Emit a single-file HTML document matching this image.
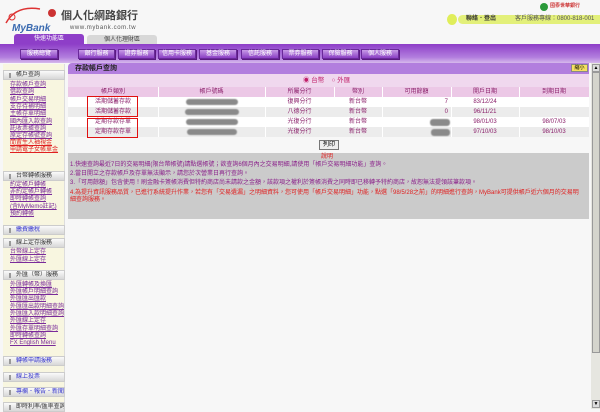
<!DOCTYPE html>
<html><head><meta charset="utf-8"><style>
*{margin:0;padding:0;box-sizing:border-box}
body{width:600px;height:409px;overflow:hidden;background:#f7f7f7;font-family:"Liberation Sans","Noto Sans CJK TC",sans-serif;position:relative}
.a{position:absolute}
.t{font-size:6px;white-space:nowrap;line-height:7px}
.btn{position:absolute;top:49px;height:10px;background:linear-gradient(#c79be6,#8a3fc4);border:1px solid #6a2a9a;color:#fff;font-size:6px;line-height:8px;text-align:center;box-shadow:1px 1px 0 #5a1a80;white-space:nowrap}
.sh{position:absolute;left:3px;width:62px;height:10px;background:linear-gradient(#fafafa,#d8d8d8);border:1px solid #ccc;font-size:6px;line-height:8px;padding-left:12px;color:#333;white-space:nowrap;overflow:hidden}
.sh:before{content:"";position:absolute;left:5px;top:2px;width:2px;height:5px;background:#999}
.it{position:absolute;left:10px;font-size:6px;line-height:7px;color:#7a2b9a;text-decoration:underline;white-space:nowrap}
.td{position:absolute;font-size:6px;line-height:10px;text-align:center;color:#8a1f6a;white-space:nowrap}
.blur{position:absolute;background:#8a8a8a;border-radius:3px;height:6px;filter:blur(.6px)}
</style></head><body>
<!-- header -->
<svg class="a" style="left:2px;top:3px" width="55" height="32"><path d="M4 20 Q14 2 38 6" stroke="#d33" stroke-width="1.5" fill="none"/><circle cx="10" cy="14" r="3" fill="none" stroke="#d33"/><circle cx="50" cy="10" r="4" fill="#c33"/><text x="10" y="28" font-size="10" font-style="italic" font-weight="bold" fill="#3a6ab0" font-family="Liberation Sans">MyBank</text></svg>
<div class="a" style="left:61px;top:10px;font-size:11px;line-height:13px;font-weight:bold;color:#444;white-space:nowrap">個人化網路銀行</div>
<div class="a t" style="left:70px;top:25px;color:#555;font-size:6px;letter-spacing:.6px">www.mybank.com.tw</div>
<div class="a" style="left:540px;top:3px;width:8px;height:8px;border-radius:50%;background:#2a9a3a"></div>
<div class="a t" style="left:550px;top:3px;color:#c33;font-size:5px;font-weight:bold">國泰世華銀行</div>
<div class="a" style="left:447px;top:14px;width:10px;height:11px;border-radius:50%;background:#e0ee5a"></div>
<div class="a" style="left:458px;top:15px;width:142px;height:9px;background:#e3f07a;border-radius:5px 0 0 5px"></div>
<div class="a t" style="left:466px;top:16px;color:#333;font-weight:bold">聯絡．登出</div>
<div class="a t" style="left:515px;top:16px;color:#555">客戶服務專線：0800-818-001</div>
<!-- tabs -->
<div class="a" style="left:14px;top:34px;width:70px;height:11px;background:#8e3ec8;border-radius:3px 3px 0 0;color:#fff;font-size:6px;line-height:11px;text-align:center">快速功能區</div>
<div class="a" style="left:87px;top:35px;width:70px;height:10px;background:#d8d8d8;border-radius:3px 3px 0 0;color:#444;font-size:6px;line-height:10px;text-align:center">個人化理財區</div>
<div class="a" style="left:0;top:44px;width:600px;height:19px;background:linear-gradient(#8e3ec8,#b27ede 70%,#d6b8ec)"></div>
<div class="btn" style="left:20px;width:38px">服務總覽</div>
<div class="btn" style="left:78px;width:37px">銀行服務</div>
<div class="btn" style="left:118px;width:37px">證券服務</div>
<div class="btn" style="left:158px;width:38px">信用卡服務</div>
<div class="btn" style="left:199px;width:38px">基金服務</div>
<div class="btn" style="left:241px;width:38px">信託服務</div>
<div class="btn" style="left:282px;width:37px">票券服務</div>
<div class="btn" style="left:322px;width:37px">保險服務</div>
<div class="btn" style="left:361px;width:38px">個人服務</div>
<!-- sidebar -->
<div class="a" style="left:3px;top:64px;width:62px;height:345px;background:#f8f6e0;border-right:1px solid #ddd"></div>
<div class="sh" style="top:70px">帳戶查詢</div>
<div class="it" style="top:82px">存款帳戶查詢</div>
<div class="it" style="top:89px">借款查詢</div>
<div class="it" style="top:97px">帳戶交易明細</div>
<div class="it" style="top:104px">支存待補明細</div>
<div class="it" style="top:111px">主帳存單明細</div>
<div class="it" style="top:119px">國內匯入款查詢</div>
<div class="it" style="top:126px">託收票據查詢</div>
<div class="it" style="top:133px">原定存帳號查詢</div>
<div class="it" style="top:140px;color:#e02020">閒置生人袖視金</div>
<div class="it" style="top:147px;color:#e02020">申請電子女帳單金</div>
<div class="sh" style="top:171px">台幣轉帳服務</div>
<div class="it" style="top:182px">約定帳戶轉帳</div>
<div class="it" style="top:189px">非約定帳戶轉帳</div>
<div class="it" style="top:196px">即時轉帳查詢</div>
<div class="it" style="top:204px">(含MyMemo註記)</div>
<div class="it" style="top:211px">預約轉帳</div>
<div class="sh" style="top:225px;color:#33c">繳費繳稅</div>
<div class="sh" style="top:238px">線上定存服務</div>
<div class="it" style="top:249px">台幣線上定存</div>
<div class="it" style="top:257px">外匯線上定存</div>
<div class="sh" style="top:270px">外匯（幣）服務</div>
<div class="it" style="top:282px">外匯轉帳及換匯</div>
<div class="it" style="top:289px">外匯帳戶明細查詢</div>
<div class="it" style="top:296px">外匯匯出匯款</div>
<div class="it" style="top:304px">外匯匯出款明細查詢</div>
<div class="it" style="top:311px">外匯匯入款明細查詢</div>
<div class="it" style="top:318px">外匯線上定存</div>
<div class="it" style="top:326px">外匯存單明細查詢</div>
<div class="it" style="top:333px">即時轉帳查詢</div>
<div class="it" style="top:340px">FX English Menu</div>
<div class="sh" style="top:356px;color:#33c">轉帳申請服務</div>
<div class="sh" style="top:372px;color:#33c">線上投票</div>
<div class="sh" style="top:387px;color:#33c">專欄．報告．新聞</div>
<div class="sh" style="top:402px">即時利率/匯率查詢</div>
<!-- content -->
<div class="a" style="left:68px;top:63px;width:521px;height:11px;background:#b27ede;border-radius:4px 0 0 0"></div>
<div class="a t" style="left:75px;top:65px;font-size:7px;font-weight:bold;color:#222">存款帳戶查詢</div>
<div class="a" style="left:571px;top:64px;width:17px;height:8px;background:#f5e060;border:1px solid #888;font-size:5px;line-height:6px;text-align:center">縮小</div>
<div class="a" style="left:68px;top:74px;width:521px;height:13px;background:#f0d8ee"></div>
<div class="a t" style="left:303px;top:77px;color:#c0206a;font-size:6.5px">◉ 台幣 &nbsp;&nbsp; ○ 外匯</div>
<div class="a" style="left:68px;top:87px;width:521px;height:10px;background:#ecc8e6"></div>
<div class="a" style="left:68px;top:97px;width:521px;height:40px;background:#fff"></div>
<div class="a" style="left:68px;top:107px;width:521px;height:10px;background:#ececec"></div>
<div class="a" style="left:68px;top:127px;width:521px;height:10px;background:#ececec"></div>
<div class="a" style="left:158px;top:87px;width:1px;height:50px;background:#fff"></div>
<div class="a" style="left:265px;top:87px;width:1px;height:50px;background:#fff"></div>
<div class="a" style="left:334px;top:87px;width:1px;height:10px;background:#fff"></div>
<div class="a" style="left:382px;top:87px;width:1px;height:50px;background:#fff"></div>
<div class="a" style="left:451px;top:87px;width:1px;height:50px;background:#fff"></div>
<div class="a" style="left:519px;top:87px;width:1px;height:50px;background:#fff"></div>
<div class="td" style="left:68px;top:87px;width:90px">帳戶類別</div>
<div class="td" style="left:158px;top:87px;width:107px">帳戶號碼</div>
<div class="td" style="left:265px;top:87px;width:69px">所屬分行</div>
<div class="td" style="left:334px;top:87px;width:48px">幣別</div>
<div class="td" style="left:382px;top:87px;width:69px">可用餘額</div>
<div class="td" style="left:451px;top:87px;width:68px">開戶日期</div>
<div class="td" style="left:519px;top:87px;width:70px">到期日期</div>
<div class="td" style="left:68px;top:97px;width:90px">活期儲蓄存款</div>
<div class="td" style="left:68px;top:107px;width:90px">活期儲蓄存款</div>
<div class="td" style="left:68px;top:117px;width:90px">定期存款存單</div>
<div class="td" style="left:68px;top:127px;width:90px">定期存款存單</div>
<div class="blur" style="left:186px;top:99px;width:52px"></div>
<div class="blur" style="left:185px;top:109px;width:54px"></div>
<div class="blur" style="left:186px;top:119px;width:52px"></div>
<div class="blur" style="left:187px;top:129px;width:50px"></div>
<div class="td" style="left:265px;top:97px;width:69px">復興分行</div>
<div class="td" style="left:265px;top:107px;width:69px">八德分行</div>
<div class="td" style="left:265px;top:117px;width:69px">光復分行</div>
<div class="td" style="left:265px;top:127px;width:69px">光復分行</div>
<div class="td" style="left:334px;top:97px;width:48px">新台幣</div>
<div class="td" style="left:334px;top:107px;width:48px">新台幣</div>
<div class="td" style="left:334px;top:117px;width:48px">新台幣</div>
<div class="td" style="left:334px;top:127px;width:48px">新台幣</div>
<div class="td" style="left:382px;top:97px;width:66px;text-align:right">7</div>
<div class="td" style="left:382px;top:107px;width:66px;text-align:right">0</div>
<div class="blur" style="left:430px;top:119px;width:20px;height:7px"></div>
<div class="blur" style="left:431px;top:129px;width:19px;height:7px"></div>
<div class="td" style="left:451px;top:97px;width:68px">83/12/24</div>
<div class="td" style="left:451px;top:107px;width:68px">96/11/21</div>
<div class="td" style="left:451px;top:117px;width:68px">98/01/03</div>
<div class="td" style="left:451px;top:127px;width:68px">97/10/03</div>
<div class="td" style="left:519px;top:117px;width:70px">98/07/03</div>
<div class="td" style="left:519px;top:127px;width:70px">98/10/03</div>
<div class="a" style="left:87px;top:96px;width:51px;height:21px;border:1.5px solid #e01010"></div>
<div class="a" style="left:87px;top:118px;width:51px;height:20px;border:1.5px solid #e01010"></div>
<div class="a" style="left:319px;top:140px;width:20px;height:10px;background:#eee;border:1px solid #777;font-size:6px;line-height:8px;text-align:center">列印</div>
<div class="a" style="left:68px;top:153px;width:521px;height:66px;background:#cbcbcb"></div>
<div class="a t" style="left:321px;top:154px;color:#e02020">說明</div>
<div class="a t" style="left:70px;top:162px;color:#8a1f8a">1.快速查詢最近7日的交易明細(限台幣帳號)請點選帳號；欲查詢6個月內之交易明細,請使用「帳戶交易明細功能」查詢。</div>
<div class="a t" style="left:70px;top:171px;color:#8a1f8a">2.當日開立之存款帳戶及存單無法顯示，請您於次營業日再行查詢。</div>
<div class="a t" style="left:70px;top:180px;color:#8a1f8a">3.「可用餘額」包含使用！刷金融卡簽帳消費但特約商店尚未請款之金額，該款項之權利於簽帳消費之同時即已移轉予特約商店，故恕無法提領該筆款項。</div>
<div class="a t" style="left:70px;top:190px;color:#e02020">4.為提升資訊服務品質，已進行系統提升作業，若您有「交易遺漏」之明細資料，您可使用「帳戶交易明細」功能，點選「98/5/28之前」的明細進行查詢，MyBank可提供帳戶近六個月的交易明</div>
<div class="a t" style="left:70px;top:197px;color:#e02020">細查詢服務。</div>
<!-- scrollbar -->
<div class="a" style="left:591px;top:63px;width:9px;height:346px;background:#e6e6e0"></div>
<div class="a" style="left:592px;top:72px;width:8px;height:281px;background:#d4d4cc;border:1px solid #999"></div>
<div class="a" style="left:592px;top:64px;width:8px;height:8px;background:#ddd;border:1px solid #999;font-size:5px;line-height:6px;text-align:center">▲</div>
<div class="a" style="left:592px;top:400px;width:8px;height:8px;background:#ddd;border:1px solid #999;font-size:5px;line-height:6px;text-align:center">▼</div>
</body></html>
